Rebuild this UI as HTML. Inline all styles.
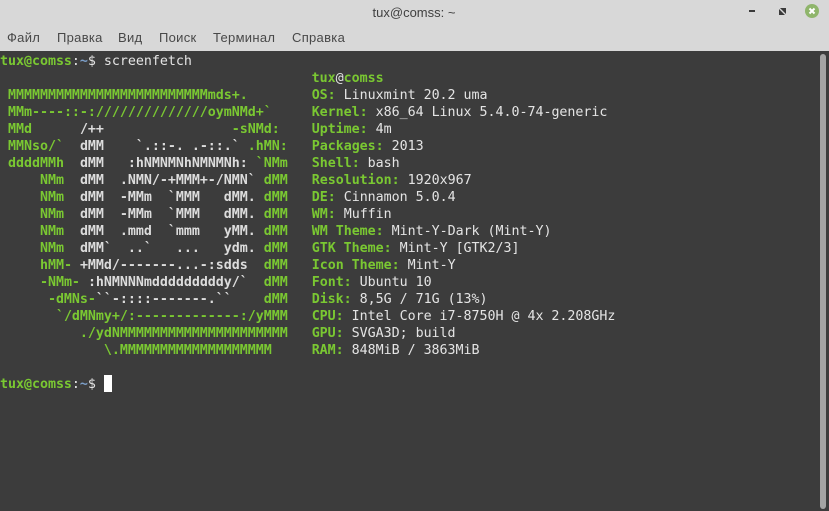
<!DOCTYPE html>
<html><head><meta charset="utf-8"><style>
html,body{margin:0;padding:0;width:829px;height:511px;overflow:hidden;background:#3c3c3c}
#bar{position:absolute;left:0;top:0;width:829px;height:51px;background:#d8d8d8}
#title{position:absolute;left:314px;width:200px;top:4px;text-align:center;font:13px/17px "Liberation Sans",sans-serif;color:#404040}
.m{position:absolute;top:29px;font:13px/17px "Liberation Sans","DejaVu Sans",sans-serif;letter-spacing:.3px;color:#484848;white-space:nowrap}
#t{position:absolute;left:0;top:53px;margin:0;font:13.333px/17px "DejaVu Sans Mono",monospace;letter-spacing:-0.033px;color:#e4e4e4;white-space:pre}
.g{color:#7ac832;font-weight:bold}
.w{color:#dcdcdc;font-weight:bold}
.b{color:#7c9fc9;font-weight:bold}
#cur{position:absolute;left:104px;top:375px;width:8px;height:17px;background:#fff}
#sb{position:absolute;left:820px;top:54px;width:6px;height:455px;background:#a4a4a4;border-radius:3px}
</style></head><body>
<div id="bar"></div>
<div id="title">tux@comss: ~</div>
<div class="m" style="left:7px">Файл</div>
<div class="m" style="left:57px">Правка</div>
<div class="m" style="left:118px">Вид</div>
<div class="m" style="left:159px">Поиск</div>
<div class="m" style="left:213px">Терминал</div>
<div class="m" style="left:292px">Справка</div>
<svg style="position:absolute;left:740px;top:0" width="89" height="24">
<rect x="9" y="10" width="6" height="2" fill="#3a3a3a"/>
<path d="M40 8h6v6zM39 9v6h6z" fill="#3a3a3a"/>
<circle cx="72" cy="11" r="7" fill="#8fb56b"/>
<path d="M69.500 8.500l5 5M74.500 8.500l-5 5" stroke="#fff" stroke-width="2"/>
</svg>
<pre id="t"><span class="g">tux@comss</span>:<span class="b">~</span>$ screenfetch
                                       <span class="g">tux</span>@<span class="g">comss</span>
 <span class="g">MMMMMMMMMMMMMMMMMMMMMMMMMmds+.</span>        <span class="g">OS:</span> Linuxmint 20.2 uma
 <span class="g">MMm----::-://////////////oymNMd+`</span>     <span class="g">Kernel:</span> x86_64 Linux 5.4.0-74-generic
 <span class="g">MMd</span>      <span class="w">/++</span>                <span class="g">-sNMd:</span>    <span class="g">Uptime:</span> 4m
 <span class="g">MMNso/`</span>  <span class="w">dMM</span>    <span class="w">`.::-. .-::.`</span> <span class="g">.hMN:</span>   <span class="g">Packages:</span> 2013
 <span class="g">ddddMMh</span>  <span class="w">dMM</span>   <span class="w">:hNMNMNhNMNMNh:</span> <span class="g">`NMm</span>   <span class="g">Shell:</span> bash
     <span class="g">NMm</span>  <span class="w">dMM</span>  <span class="w">.NMN/-+MMM+-/NMN`</span> <span class="g">dMM</span>   <span class="g">Resolution:</span> 1920x967
     <span class="g">NMm</span>  <span class="w">dMM</span>  <span class="w">-MMm  `MMM   dMM.</span> <span class="g">dMM</span>   <span class="g">DE:</span> Cinnamon 5.0.4
     <span class="g">NMm</span>  <span class="w">dMM</span>  <span class="w">-MMm  `MMM   dMM.</span> <span class="g">dMM</span>   <span class="g">WM:</span> Muffin
     <span class="g">NMm</span>  <span class="w">dMM</span>  <span class="w">.mmd  `mmm   yMM.</span> <span class="g">dMM</span>   <span class="g">WM Theme:</span> Mint-Y-Dark (Mint-Y)
     <span class="g">NMm</span>  <span class="w">dMM`  ..`   ...   ydm.</span> <span class="g">dMM</span>   <span class="g">GTK Theme:</span> Mint-Y [GTK2/3]
     <span class="g">hMM-</span> <span class="w">+MMd/-------...-:sdds</span>  <span class="g">dMM</span>   <span class="g">Icon Theme:</span> Mint-Y
     <span class="g">-NMm-</span> <span class="w">:hNMNNNmdddddddddy/`</span>  <span class="g">dMM</span>   <span class="g">Font:</span> Ubuntu 10
      <span class="g">-dMNs-</span><span class="w">``-::::-------.``</span>    <span class="g">dMM</span>   <span class="g">Disk:</span> 8,5G / 71G (13%)
       <span class="g">`/dMNmy+/:-------------:/yMMM</span>   <span class="g">CPU:</span> Intel Core i7-8750H @ 4x 2.208GHz
          <span class="g">./ydNMMMMMMMMMMMMMMMMMMMMM</span>   <span class="g">GPU:</span> SVGA3D; build
             <span class="g">\.MMMMMMMMMMMMMMMMMMM</span>     <span class="g">RAM:</span> 848MiB / 3863MiB

<span class="g">tux@comss</span>:<span class="b">~</span>$ </pre>
<div id="cur"></div>
<div id="sb"></div>
</body></html>
